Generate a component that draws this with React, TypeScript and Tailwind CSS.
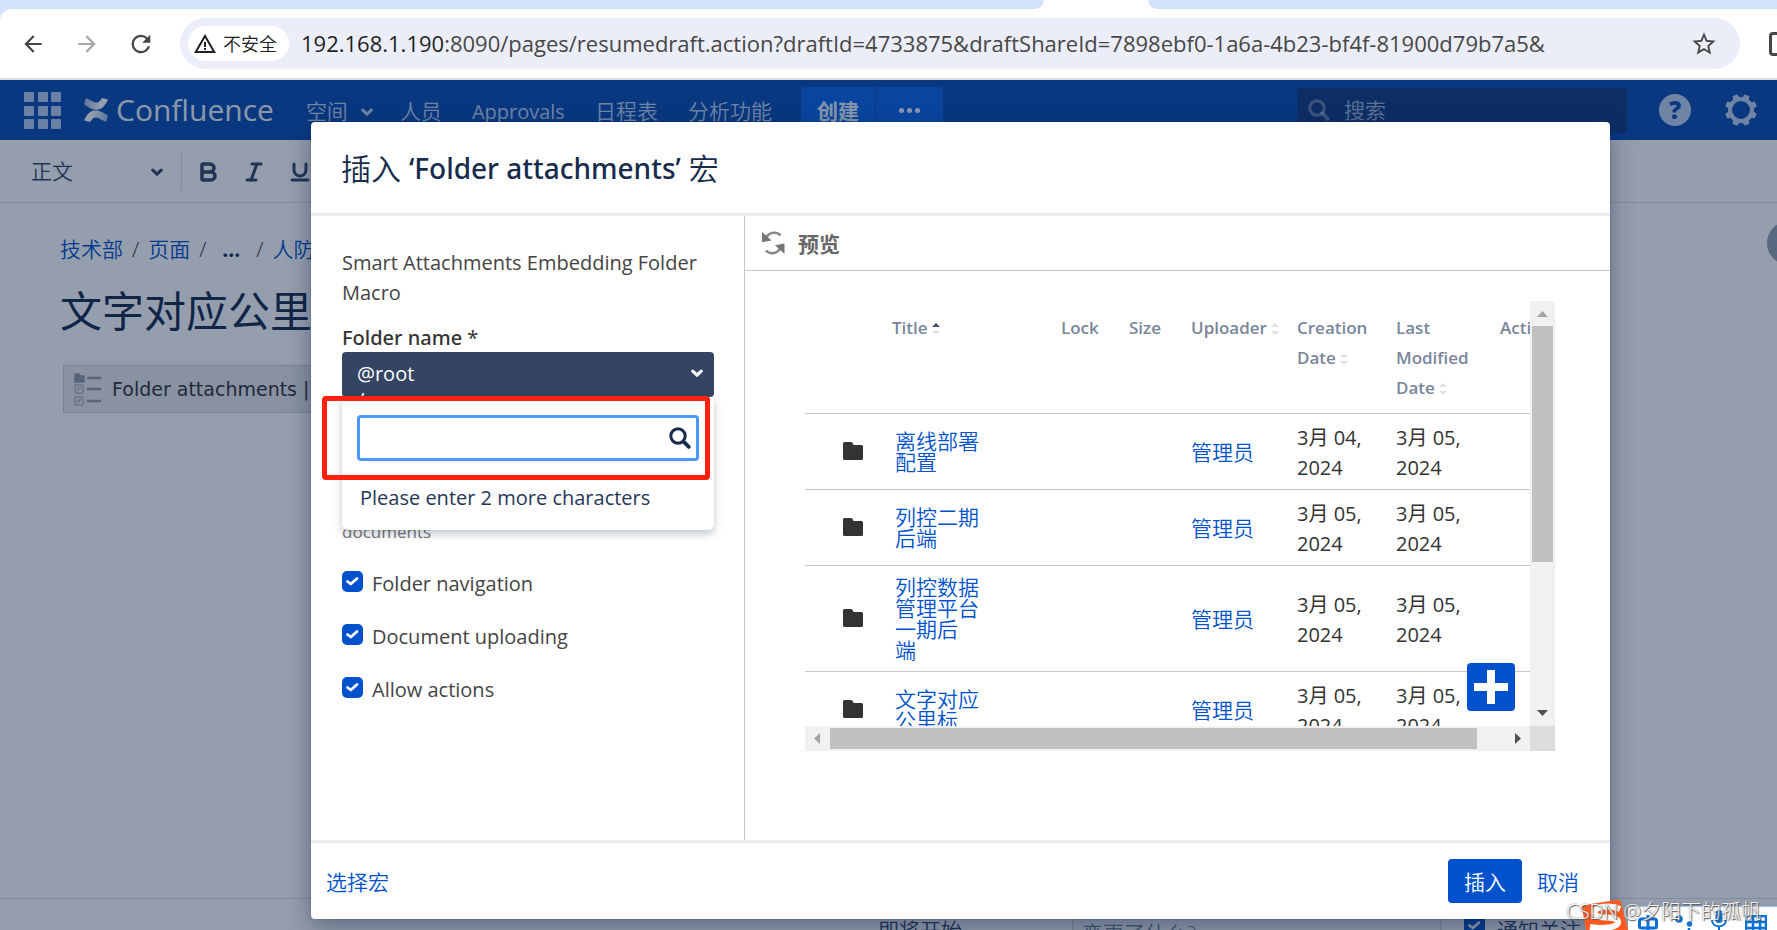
import type { ReactNode } from 'react';
import { Bold, Italic, Underline } from 'lucide-react';
import { MdArrowBack, MdArrowForward, MdRefresh, MdStarBorder, MdWarningAmber } from 'react-icons/md';

// ─── Data ────────────────────────────────────────────────────────────────────

interface FolderRow {
  id: number;
  title: string[];
  uploader: string;
  created: string;
  modified: string;
}

const ROWS: FolderRow[] = [
  { id: 1, title: ['离线部署', '配置'], uploader: '管理员', created: '04', modified: '05' },
  { id: 2, title: ['列控二期', '后端'], uploader: '管理员', created: '05', modified: '05' },
  { id: 3, title: ['列控数据', '管理平台', '一期后', '端'], uploader: '管理员', created: '05', modified: '05' },
  { id: 4, title: ['文字对应', '公里标'], uploader: '管理员', created: '05', modified: '05' },
];

const OPTIONS = ['Folder navigation', 'Document uploading', 'Allow actions'];

// ─── Icons ───────────────────────────────────────────────────────────────────

function SearchIcon({ className }: { className?: string }) {
  return (
    <svg viewBox="0 0 22 22" className={className} fill="none" stroke="currentColor" strokeLinecap="round">
      <circle cx="9" cy="9" r="7.2" strokeWidth="3" />
      <path d="M14.6 14.6 L19.8 19.8" strokeWidth="3.8" />
    </svg>
  );
}

function Chevron({ className }: { className?: string }) {
  return (
    <svg viewBox="0 0 14 9" className={className} fill="none" stroke="currentColor" strokeWidth="3.200" strokeLinecap="round" strokeLinejoin="round">
      <path d="M2.800 2.200 L7 6.200 L11.200 2.200" />
    </svg>
  );
}

function AppGridIcon() {
  const cells = [0, 14, 27];
  return (
    <svg viewBox="0 0 37 37" className="w-[37px] h-[37px]" fill="#deebff" opacity=".8">
      {cells.map(y => cells.map(x => <rect key={`${x}-${y}`} x={x} y={y} width="10" height="10" rx="1" />))}
    </svg>
  );
}

function ConfluenceMark() {
  return (
    <svg viewBox="0 0 24 24" className="w-6 h-6">
      <defs>
        <linearGradient id="markTop" x1="0" y1="0" x2="1" y2="0">
          <stop offset="0" stopColor="#fff" stopOpacity=".6" />
          <stop offset=".7" stopColor="#fff" />
        </linearGradient>
        <linearGradient id="markBottom" x1="1" y1="0" x2="0" y2="0">
          <stop offset="0" stopColor="#fff" stopOpacity=".6" />
          <stop offset=".7" stopColor="#fff" />
        </linearGradient>
      </defs>
      <path fill="url(#markTop)" d="M3 .6 C2.300.3 1.800.6 1.500 1.200 L.3 5.600 C.1 6.300.4 6.900 1 7.200 C5.500 9.600 8 11.800 12.400 11.800 C17.800 11.800 20.500 8 23.500 2.800 C23.800 2.200 23.700 1.600 23.100 1.200 L18.800.2 C18.200 0 17.700.1 17.400.7 C15.500 3.800 14.400 4.600 12.200 4.600 C9.800 4.600 7.500 2.800 3 .6 Z" />
      <path fill="url(#markBottom)" d="M21 23.400 C21.700 23.700 22.200 23.400 22.500 22.800 L23.700 18.400 C23.900 17.700 23.600 17.100 23 16.800 C18.500 14.400 16 12.200 11.600 12.200 C6.200 12.200 3.500 16 .5 21.200 C.2 21.800.3 22.400.9 22.800 L5.200 23.800 C5.800 24 6.300 23.900 6.600 23.300 C8.500 20.200 9.600 19.400 11.800 19.400 C14.200 19.400 16.500 21.200 21 23.400 Z" />
    </svg>
  );
}

function GearIcon() {
  const teeth = [0, 45, 90, 135, 180, 225, 270, 315];
  return (
    <svg viewBox="0 0 32 32" className="w-8 h-8 text-[#deebff]" opacity=".85">
      <circle cx="16" cy="16" r="11" fill="none" stroke="currentColor" strokeWidth="4" />
      {teeth.map(a => (
        <path key={a} d="M12.600 4.500 L13.200.9 Q13.300 0 14.200 0 H17.800 Q18.700 0 18.800.9 L19.400 4.500 Z" fill="currentColor" transform={`rotate(${a + 22.5} 16 16)`} />
      ))}
    </svg>
  );
}

function FolderIcon() {
  return (
    <svg viewBox="0 0 20 18" className="w-5 h-[18px]" fill="#333">
      <path d="M1.500 0 H8 Q9.500 0 9.800 1.500 Q10 3 11.500 3 H18.500 Q20 3 20 4.500 V16.500 Q20 18 18.500 18 H1.500 Q0 18 0 16.500 V1.500 Q0 0 1.500 0 Z" />
    </svg>
  );
}

function MacroIcon() {
  return (
    <svg viewBox="0 0 28 34" className="w-7 h-[34px]" fill="none" stroke="#b3b6bd" strokeWidth="1.500">
      <path d="M1 2 H5 L6 4 H10 V10 H1 Z" fill="#9599a1" stroke="#9599a1" />
      <rect x="1" y="13" width="8" height="8" rx="1" />
      <path d="M3 19 L7 15 M3 16 H5" />
      <rect x="1" y="25" width="8" height="8" rx="1" />
      <path d="M3 31 L7 27 M3 28 H5" />
      <path d="M13 6 H27 M13 17 H27 M13 29 H27" stroke="#9599a1" strokeWidth="2.500" />
    </svg>
  );
}

function RefreshIcon() {
  return (
    <svg viewBox="0 0 24 24" className="w-6 h-6" fill="none" stroke="#888" strokeWidth="2.600">
      <path d="M19.500 4.500 C16 .5 9 .8 5.500 6" />
      <path d="M1 1 V11.200 L10.500 9.500 Z" fill="#777" stroke="none" />
      <path d="M5 19.500 C8.500 23.500 16 23.200 19 17.500" />
      <path d="M23.500 23 V12.500 L14 14.200 Z" fill="#777" stroke="none" />
    </svg>
  );
}

function SortArrows({ active = false }: { active?: boolean }) {
  return (
    <svg viewBox="0 0 8 12" className="inline-block w-2 h-3 ml-1">
      <path d="M0 4 L4 0 L8 4 Z" fill={active ? '#42526e' : '#dfe1e6'} />
      <path d="M0 8 L4 12 L8 8 Z" fill="#dfe1e6" />
    </svg>
  );
}

// ─── Browser chrome ──────────────────────────────────────────────────────────

function BrowserBar() {
  return (
    <div className="shrink-0 bg-[#d3e3fd]">
      <div className="flex h-[9px]">
        <div className="w-[1044px] bg-white">
          <div className="h-full bg-[#d3e3fd] rounded-br-[9px]" />
        </div>
        <div className="w-[104px] bg-white" />
        <div className="flex-1 bg-white">
          <div className="h-full bg-[#d3e3fd] rounded-bl-[9px]" />
        </div>
      </div>
      <div className="flex items-center h-[71px] pt-[9px] pb-[9px] pl-5 bg-white rounded-tl-xl border-b-2 border-[#dfdfdf] overflow-hidden">
        <button aria-label="Back" className="w-[26px] text-[#474747]"><MdArrowBack className="w-[26px] h-[26px]" /></button>
        <button aria-label="Forward" className="w-[26px] ml-7 text-[#a9a9a9]"><MdArrowForward className="w-[26px] h-[26px]" /></button>
        <button aria-label="Reload" className="w-[28px] ml-[27px] text-[#474747]"><MdRefresh className="w-[28px] h-[28px]" /></button>
        <div className="flex items-center flex-1 min-w-0 h-[51px] ml-[25px] pl-2 pr-[22px] rounded-full bg-[#ebeef8]">
          <button className="flex items-center gap-1.5 h-[35px] pl-[5px] pr-3 shrink-0 rounded-full bg-white text-lg text-[#1f1f1f]">
            <MdWarningAmber className="w-6 h-6" />
            <span className="pt-px font-[350]">不安全</span>
          </button>
          <div className="flex-1 min-w-0 ml-3 truncate text-[22px] text-[#474747]">
            <span className="text-[#1f1f1f]">192.168.1.190</span>:8090/pages/resumedraft.action?draftId=4733875&amp;draftShareId=7898ebf0-1a6a-4b23-bf4f-81900d79b7a5&amp;
          </div>
          <button aria-label="Bookmark" className="text-[#474747]"><MdStarBorder className="w-7 h-7" /></button>
        </div>
        <div className="shrink-0 w-[37px] pl-[29px]">
          <div className="w-6 h-6 border-[3px] border-[#474747] rounded-sm" />
        </div>
      </div>
    </div>
  );
}

// ─── Confluence page behind the dialog ───────────────────────────────────────

function NavLink({ children }: { children: ReactNode }) {
  return <a href="#" className="flex items-center gap-3 whitespace-nowrap">{children}</a>;
}

function AppHeader() {
  return (
    <header className="flex items-center shrink-0 h-[60px] pl-6 pr-5 bg-[#0a4db0] text-[#deebff]/85">
      <button aria-label="Apps"><AppGridIcon /></button>
      <a href="#" className="flex items-center gap-2 ml-[23px] text-3xl text-white/95">
        <ConfluenceMark />
        Confluence
      </a>
      <nav className="flex items-center gap-[30px] ml-8 pt-1 text-[21px] font-[350]">
        <NavLink>空间 <Chevron className="w-3.5 h-[9px] -mr-1" /></NavLink>
        <NavLink>人员</NavLink>
        <NavLink><span className="text-xl font-normal">Approvals</span></NavLink>
        <NavLink>日程表</NavLink>
        <NavLink>分析功能</NavLink>
      </nav>
      <div className="flex h-[46px] ml-[29px] rounded overflow-hidden text-white/90">
        <button className="w-[74px] bg-[#0a63e6] pt-1 text-[21px] font-bold">创建</button>
        <button aria-label="More" className="flex items-center justify-center gap-[3px] w-[67px] ml-px bg-[#0a63e6]">
          <i className="w-[5px] h-[5px] rounded-full bg-current" />
          <i className="w-[5px] h-[5px] rounded-full bg-current" />
          <i className="w-[5px] h-[5px] rounded-full bg-current" />
        </button>
      </div>
      <label className="flex items-center gap-3.5 w-[330px] h-[45px] ml-auto pl-[11px] pr-3 rounded bg-[#103a80]">
        <SearchIcon className="w-[22px] h-[22px] text-white/35" />
        <input aria-label="搜索" placeholder="搜索" className="min-w-0 flex-1 pt-0.5 bg-transparent text-[21px] font-[350] placeholder:text-[#deebff]/70 outline-none" />
      </label>
      <button aria-label="Help" className="w-8 h-8 ml-8 rounded-full bg-[#deebff]/85 text-[#0a4db0] text-2xl leading-8 font-extrabold">?</button>
      <button aria-label="Settings" className="ml-[34px]"><GearIcon /></button>
    </header>
  );
}

function EditorPage() {
  return (
    <>
      <div className="flex items-center shrink-0 h-[63px] pl-[31px] border-b border-[#dfe1e6] text-[#344563]">
        <button className="flex items-center justify-between w-[133px] pt-0.5 text-[21px] font-[350]">
          正文 <Chevron className="w-3.5 h-[9px]" />
        </button>
        <div className="w-px h-10 ml-[17px] bg-[#dfe1e6]" />
        <div className="flex items-center gap-[22px] pt-px ml-3.5">
          <button aria-label="Bold"><Bold className="w-6 h-6" strokeWidth={3.5} /></button>
          <button aria-label="Italic"><Italic className="w-6 h-6" strokeWidth={3} /></button>
          <button aria-label="Underline"><Underline className="w-6 h-6" strokeWidth={3} /></button>
        </div>
      </div>
      <main className="flex-1 min-h-0 pl-[60px] pt-8">
        <nav className="flex items-center gap-[9px] h-[30px] text-[21px] font-[350] text-[#0052cc]">
          <a href="#">技术部</a><span className="text-[#333]">/</span>
          <a href="#">页面</a><span className="text-[#333]">/</span>
          <a href="#" className="w-8 text-center font-bold text-[#172b4d]">...</a><span className="text-[#333]">/</span>
          <a href="#">人防</a>
        </nav>
        <h1 className="mt-4 text-[42px] leading-[60px] text-[#172b4d]">文字对应公里标</h1>
        <div className="flex items-center gap-2.5 w-1/2 h-[48px] mt-6 ml-[3px] pl-2.5 border border-[#d0d2d8] bg-[#e9eaec] font-['DejaVu_Sans',sans-serif] text-[19px] text-[#333]">
          <MacroIcon />
          Folder attachments |
        </div>
      </main>
      <footer className="flex items-start shrink-0 h-8 pt-4 pr-[196px] border-t border-[#dfe1e6] text-[21px] font-[350] text-[#344563] overflow-hidden">
        <span className="ml-[878px] w-[194px] whitespace-nowrap">即将开始...</span>
        <input aria-label="变更了什么?" placeholder="变更了什么?" className="min-w-0 flex-1 h-9 px-2 border-2 border-[#dfe1e6] bg-[#fafbfc] placeholder:text-[#7a869a]" />
        <label className="flex items-start gap-3 ml-[22px] whitespace-nowrap">
          <Checkbox />
          通知关注
        </label>
      </footer>
    </>
  );
}

function Checkbox() {
  return (
    <span className="grid shrink-0 w-[21px] h-[21px]">
      <input type="checkbox" defaultChecked className="[grid-area:1/1] appearance-none w-[21px] h-[21px] rounded-[5px] bg-[#0052cc]" />
      <svg viewBox="0 0 21 21" className="[grid-area:1/1] w-[21px] h-[21px] pointer-events-none" fill="none" stroke="#fff" strokeWidth="2.800" strokeLinecap="round" strokeLinejoin="round">
        <path d="M5.500 10.500 L8.800 13 L15 7.500" />
      </svg>
    </span>
  );
}

// ─── Macro dialog ────────────────────────────────────────────────────────────

function MacroForm() {
  return (
    <section className="w-[434px] shrink-0 pl-[31px] pr-[30px] pt-8 border-r border-[#c8c8c8] text-xl text-[#333]">
      <p className="leading-[30px] text-[#444]">Smart Attachments Embedding Folder Macro</p>
      <div className="relative mt-[15px]">
        <div className="leading-[29px] font-['Noto_Sans',sans-serif] font-medium">Folder name <span className="font-normal">*</span></div>
        <button aria-label="Folder name" className="flex justify-between w-full h-[45px] px-[15px] pr-2.5 rounded bg-[#344563] text-white text-left overflow-hidden">
          <span className="leading-[26px] pt-[9px]">@root<br />/</span>
          <Chevron className="w-3.5 h-[9px] mt-[17px]" />
        </button>
        <div className="absolute top-[74px] inset-x-0 h-[133px] px-[15px] pt-[18px] rounded-b-md bg-white shadow-[0_4px_8px_rgba(9,30,66,0.25)] z-10">
          <label className="flex items-center h-[46px] pr-[5px] rounded border-[3px] border-[#4c9aff]">
            <input aria-label="Search folder" className="flex-1 min-w-0 h-full px-2 outline-none" />
            <SearchIcon className="w-[22px] h-[22px] text-[#172b4d]" />
          </label>
          <p className="mt-[22px] pl-[3px] leading-[30px] text-[#253858]">Please enter 2 more characters</p>
        </div>
        <div className="absolute top-[73px] -left-5 right-1 h-[84px] border-[5px] border-[#ff2010] rounded z-20" />
        <p className="h-[150px] pt-[121px] text-[17px] leading-[28px] text-[#777]">documents</p>
      </div>
      <div className="flex flex-col gap-[22px] mt-[21px]">
        {OPTIONS.map(label => (
          <label key={label} className="flex gap-[9px] leading-[31px] text-[#444]">
            <span className="pt-[3px]"><Checkbox /></span>
            {label}
          </label>
        ))}
      </div>
    </section>
  );
}

function AttachmentsTable() {
  return (
    <table className="w-[800px] table-fixed text-left text-xl text-[#333]">
      <colgroup>
        <col className="w-[87px]" />
        <col className="w-[169px]" />
        <col className="w-[68px]" />
        <col className="w-[62px]" />
        <col className="w-[106px]" />
        <col className="w-[99px]" />
        <col className="w-[104px]" />
        <col className="w-[105px]" />
      </colgroup>
      <thead>
        <tr className="h-[112px] align-top text-[17px] leading-[30px] text-[#7a869a] border-b border-[#c8c8c8] [&>th]:font-semibold [&>th]:pt-3">
          <th />
          <th>Title<SortArrows active /></th>
          <th>Lock</th>
          <th>Size</th>
          <th className="whitespace-nowrap">Uploader<SortArrows /></th>
          <th>Creation<br />Date<SortArrows /></th>
          <th>Last<br />Modified<br />Date<SortArrows /></th>
          <th>Actions</th>
        </tr>
      </thead>
      <tbody>
        {ROWS.map(row => (
          <tr key={row.id} className="h-[76px] border-b border-[#c8c8c8]">
            <td className="pl-[38px]"><FolderIcon /></td>
            <td className="pl-[3px] pt-[11px] pb-2.5">
              <a href="#" className="block text-[21px] leading-[21px] font-[350] text-[#0052cc]">
                {row.title.map(line => <span key={line} className="block">{line}</span>)}
              </a>
            </td>
            <td />
            <td />
            <td className="pt-[3px]"><a href="#" className="text-[21px] font-[350] text-[#0052cc]">{row.uploader}</a></td>
            <td className="pt-[3px] leading-[30px]">3月 {row.created},<br />2024</td>
            <td className="pt-[3px] leading-[30px]">3月 {row.modified},<br />2024</td>
            <td />
          </tr>
        ))}
      </tbody>
    </table>
  );
}

function Preview() {
  return (
    <section className="flex flex-col flex-1 min-w-0">
      <div className="flex items-center gap-[13px] h-[55px] pl-4 border-b border-[#c8c8c8] text-[21px] font-bold text-[#666]">
        <button aria-label="Refresh preview"><RefreshIcon /></button>
        <span className="pt-1">预览</span>
      </div>
      <div className="relative h-[450px] mt-[30px] ml-[60px] mr-[55px] flex flex-col">
        <div className="flex flex-1 min-h-0">
          <div className="flex-1 min-w-0 overflow-hidden">
            <AttachmentsTable />
          </div>
          <div className="flex flex-col items-center w-[25px] shrink-0 bg-[#f1f1f1]">
            <svg viewBox="0 0 25 25" className="w-[25px] h-[25px] shrink-0"><path d="M7 16 H18 L12.500 10 Z" fill="#a3a3a3" /></svg>
            <div className="w-[21px] h-[236px] bg-[#c1c1c1]" />
            <svg viewBox="0 0 25 25" className="w-[25px] h-[25px] mt-auto"><path d="M7 9 H18 L12.500 15 Z" fill="#505050" /></svg>
          </div>
        </div>
        <div className="flex shrink-0 h-[25px]">
          <div className="flex items-center flex-1 bg-[#f1f1f1]">
            <svg viewBox="0 0 25 25" className="w-[25px] h-[25px] shrink-0"><path d="M15 7 V18 L9 12.500 Z" fill="#a3a3a3" /></svg>
            <div className="flex-1 h-[21px] mr-7 bg-[#c1c1c1]" />
            <svg viewBox="0 0 25 25" className="w-[25px] h-[25px] shrink-0"><path d="M10 7 V18 L16 12.500 Z" fill="#505050" /></svg>
          </div>
          <div className="w-[25px] bg-[#dcdcdc]" />
        </div>
        <button aria-label="Add" className="absolute right-10 bottom-10 flex items-center justify-center w-12 h-12 rounded bg-[#0052cc]">
          <svg viewBox="0 0 34 34" className="w-[34px] h-[34px]"><path d="M13 0 H21 V13 H34 V21 H21 V34 H13 V21 H0 V13 H13 Z" fill="#fff" /></svg>
        </button>
      </div>
    </section>
  );
}

function MacroDialog() {
  return (
    <div role="dialog" className="flex flex-col h-full bg-white rounded shadow-[0_0_0_1px_rgba(9,30,66,0.08),0_8px_24px_rgba(9,30,66,0.4)]">
      <h2 className="flex items-center shrink-0 h-[94px] pl-[30px] border-b-[3px] border-[#ebecf0] text-[28px] text-[#172b4d]">
        <span className="pt-0.5 text-[30px] font-[350]">插入</span>
        <span className="px-2 font-['Noto_Sans',sans-serif] font-medium">‘Folder attachments’</span>
        <span className="pt-0.5 text-[30px] font-[350]">宏</span>
      </h2>
      <div className="flex flex-1 min-h-0">
        <MacroForm />
        <Preview />
      </div>
      <div className="flex items-center shrink-0 h-[79px] pl-[15px] pr-[31px] border-t-[3px] border-[#ebecf0] text-[21px] font-[350] text-[#0052cc]">
        <a href="#" className="pt-[3px]">选择宏</a>
        <button className="w-[74px] h-[44px] ml-auto pt-[3px] rounded bg-[#0052cc] text-white">插入</button>
        <button className="ml-[15px] pt-[3px]">取消</button>
      </div>
    </div>
  );
}

// ─── Input method bar ────────────────────────────────────────────────────────

function ImeBar() {
  return (
    <div className="absolute right-0 bottom-0 flex w-[195px] h-[32px] text-[#0b6fd6]">
      <svg viewBox="0 0 46 32" className="w-[46px] h-8 shrink-0">
        <path d="M0 10 Q0 8 3 7 L34 2 Q38 1 39 5 L46 32 H4 Z" fill="#ff5a1f" />
        <path d="M38 11 C26 6 10 9 13 16 C16 22 36 17 36 24 C36 30 20 31 8 29" fill="none" stroke="#fff" strokeWidth="6" />
      </svg>
      <div className="flex flex-1 gap-[17px] mt-2 pt-2 pl-2.5 bg-white border-t border-[#9cc4ee] overflow-hidden">
        <svg viewBox="0 0 20 20" className="w-5 h-5 shrink-0" fill="none" stroke="currentColor" strokeWidth="3"><rect x="1.500" y="4" width="17" height="9" rx="2" /><path d="M10 0 V20" /></svg>
        <svg viewBox="0 0 18 20" className="w-[18px] h-5 shrink-0" fill="none" stroke="currentColor" strokeWidth="2.500"><circle cx="4" cy="4" r="2.500" /><circle cx="14.500" cy="9" r="1.500" /><path d="M14 13 V20" /></svg>
        <svg viewBox="0 0 18 20" className="w-[18px] h-5 shrink-0 overflow-visible" fill="none" stroke="currentColor" strokeWidth="2"><rect x="5.500" y="-5" width="7" height="13" rx="3.500" fill="currentColor" stroke="none" /><path d="M2 5 C2 13.500 16 13.500 16 5 M9 11 V20" /></svg>
        <svg viewBox="0 0 22 20" className="w-[22px] h-5 shrink-0" fill="none" stroke="currentColor" strokeWidth="2.500"><rect x="1" y="1" width="20" height="20" /><path d="M1 7 H21 M1 13 H21 M8 1 V20 M15 1 V20" /></svg>
      </div>
    </div>
  );
}

export default function App() {
  return (
    <div className="relative flex flex-col h-screen overflow-hidden bg-white font-['Open_Sans','Noto_Sans_CJK_SC',sans-serif]">
      <BrowserBar />
      <div className="relative flex flex-col flex-1 min-h-0 overflow-hidden">
        <AppHeader />
        <EditorPage />
        <div className="absolute -right-[34px] top-[141px] w-11 h-11 rounded-full bg-[#97a0af]" />
        <div className="absolute inset-0 pt-[42px] pb-[11px] pl-[311px] pr-[167px] bg-[#091e42]/43">
          <MacroDialog />
        </div>
      </div>
      <ImeBar />
      <div className="absolute right-4 bottom-1.5 text-xl leading-6 font-light text-white/90 [text-shadow:1px_1px_1px_#555,0_0_2px_#777]">
        CSDN @夕阳下的孤帆
      </div>
    </div>
  );
}
